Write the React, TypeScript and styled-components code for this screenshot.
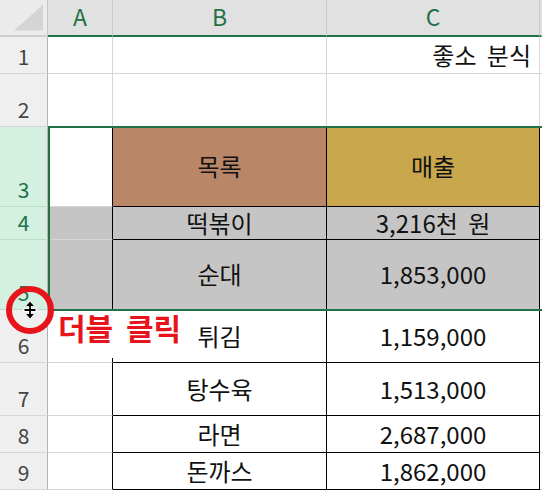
import * as React from 'react'
import styled, { createGlobalStyle } from 'styled-components'

const GREEN = '#217346'
const RED = '#e8141c'
const GRID = '#d6d6d6'

type Fill = 'none' | 'brown' | 'gold' | 'gray'

interface Row {
  n: number
  height: number
  selected?: boolean
  fill?: Fill
  headFill?: Fill
  b: string
  c: string
  ruled: boolean
}

const rows: Row[] = [
  { n: 1, height: 37, b: '', c: '좋소 분식', ruled: false },
  { n: 2, height: 53, b: '', c: '', ruled: false },
  { n: 3, height: 80, selected: true, headFill: 'brown', b: '목록', c: '매출', ruled: true },
  { n: 4, height: 33, selected: true, fill: 'gray', b: '떡볶이', c: '3,216천 원', ruled: true },
  { n: 5, height: 70, selected: true, fill: 'gray', b: '순대', c: '1,853,000', ruled: true },
  { n: 6, height: 53, b: '튀김', c: '1,159,000', ruled: true },
  { n: 7, height: 53, b: '탕수육', c: '1,513,000', ruled: true },
  { n: 8, height: 37, b: '라면', c: '2,687,000', ruled: true },
  { n: 9, height: 37, b: '돈까스', c: '1,862,000', ruled: true },
]

const fills: Record<Fill, string> = {
  none: '#ffffff',
  brown: '#b98768',
  gold: '#c9a84d',
  gray: '#c5c5c5',
}

const GlobalStyle = createGlobalStyle`
  html, body {
    margin: 0;
    padding: 0;
    background: #ffffff;
  }
  body {
    font-family: "Noto Sans CJK KR", "Noto Sans", sans-serif;
  }
`

export default function App() {
  const template = '37px ' + rows.map((r) => `${r.height}px`).join(' ')

  return (
    <>
      <GlobalStyle />
      <Frame>
        <Sheet style={{ gridTemplateRows: template }}>
          <Corner>
            <CornerMark viewBox="0 0 32 28">
              <polygon points="31,1 31,27 2,27" fill="#d4d4d4" />
            </CornerMark>
          </Corner>
          <ColHeader $col={2}>A</ColHeader>
          <ColHeader $col={3}>B</ColHeader>
          <ColHeader $col={4}>C</ColHeader>
          <ColHeader $col={5} $last />

          {rows.map((r) => {
            const line = r.n + 1
            return (
              <React.Fragment key={r.n}>
                <RowHeader $row={line} $selected={!!r.selected}>
                  {r.n}
                </RowHeader>
                <Cell $row={line} $col={2} $fill={r.fill ?? 'none'} $edge={r.ruled} $ruled={false} />
                <Cell $row={line} $col={3} $fill={r.fill ?? r.headFill ?? 'none'} $ruled={r.ruled}>
                  {r.b}
                </Cell>
                <Cell
                  $row={line}
                  $col={4}
                  $fill={r.fill ?? (r.headFill ? 'gold' : 'none')}
                  $ruled={r.ruled}
                  $align={r.n === 1 ? 'right' : 'center'}
                >
                  {r.c}
                </Cell>
                <Spill $row={line} />
              </React.Fragment>
            )
          })}

          <Selection />
          <Callout>더블 클릭</Callout>
        </Sheet>

        {/* red ring + row-resize cursor over the 5/6 row boundary */}
        <Ring width="50" height="50" viewBox="0 0 50 50">
          <circle cx="25" cy="25" r="21" fill="none" stroke={RED} strokeWidth="6" />
          <path
            d="M25 17.5 V32.5 M19.5 25 H30.5"
            stroke="#ffffff"
            strokeWidth="3.5"
            fill="none"
            strokeLinecap="round"
          />
          <path d="M25 18 V32 M19.5 25 H30.5" stroke="#000" strokeWidth="1.8" />
          <polygon points="25,16.5 21.2,21 28.8,21" fill="#000" />
          <polygon points="25,33.5 21.2,29 28.8,29" fill="#000" />
        </Ring>
      </Frame>
    </>
  )
}

// Styles
const Frame = styled.div`
  position: relative;
  width: 542px;
  height: 490px;
  overflow: hidden;
`

const Sheet = styled.div`
  display: grid;
  grid-template-columns: 48px 65px 214px 213px 1fr;
  width: 542px;
  height: 490px;
  background: #ffffff;
`

const Corner = styled.div`
  grid-row: 1;
  grid-column: 1;
  display: flex;
  align-items: flex-end;
  justify-content: flex-end;
  padding: 0 3px 3px 0;
  background: #ebebeb;
  border-right: 1px solid #c6c6c6;
  border-bottom: 2px solid #cfcfcf;
  box-sizing: border-box;
`

const CornerMark = styled.svg`
  width: 32px;
  height: 29px;
`

const ColHeader = styled.div<{ $col: number; $last?: boolean }>`
  grid-row: 1;
  grid-column: ${(p) => p.$col};
  display: flex;
  align-items: center;
  justify-content: center;
  padding-bottom: 3px;
  background: #e1e1e1;
  color: ${GREEN};
  font-size: 23px;
  border-right: 1px solid ${(p) => (p.$last ? 'transparent' : '#cacaca')};
  border-bottom: 2px solid ${GREEN};
  box-sizing: border-box;
`

const RowHeader = styled.div<{ $row: number; $selected: boolean }>`
  grid-row: ${(p) => p.$row};
  grid-column: 1;
  display: flex;
  align-items: flex-end;
  justify-content: center;
  padding-bottom: 6px;
  font-size: 21px;
  line-height: 1;
  background: ${(p) => (p.$selected ? '#d3f0e0' : '#efefef')};
  color: ${(p) => (p.$selected ? GREEN : '#444444')};
  border-right: 1px solid #b4b4b4;
  border-bottom: 1px solid ${(p) => (p.$selected ? '#bcdcc9' : GRID)};
  box-sizing: border-box;
`

const Cell = styled.div<{
  $row: number
  $col: number
  $fill: Fill
  $ruled: boolean
  $edge?: boolean
  $align?: 'center' | 'right'
}>`
  grid-row: ${(p) => p.$row};
  grid-column: ${(p) => p.$col};
  display: flex;
  align-items: ${(p) => (p.$align === 'right' ? 'flex-end' : 'center')};
  justify-content: ${(p) => (p.$align === 'right' ? 'flex-end' : 'center')};
  padding: ${(p) => (p.$align === 'right' ? '0 8px 3px 0' : '0')};
  font-size: 24px;
  line-height: 1.2;
  word-spacing: 5px;
  color: #111111;
  white-space: pre;
  background: ${(p) => fills[p.$fill]};
  border-right: 1px solid ${(p) => (p.$ruled || p.$edge ? '#000000' : GRID)};
  border-bottom: 1px solid ${(p) => (p.$ruled ? '#000000' : GRID)};
  box-sizing: border-box;
`

const Spill = styled.div<{ $row: number }>`
  grid-row: ${(p) => p.$row};
  grid-column: 5;
  background: #ffffff;
  border-bottom: 1px solid ${GRID};
`

const Selection = styled.div`
  grid-row: 4 / 7;
  grid-column: 2 / -1;
  margin: -1px 0 -1px 0;
  border: 2px solid ${GREEN};
  border-right: none;
  pointer-events: none;
  z-index: 1;
`

const Callout = styled.div`
  grid-row: 7;
  grid-column: 2 / 4;
  justify-self: start;
  align-self: start;
  margin: 1px 0 0 4px;
  padding: 0 10px 15px 6px;
  background: #ffffff;
  color: ${RED};
  font-size: 30px;
  font-weight: 700;
  line-height: 32px;
  word-spacing: 6px;
  white-space: pre;
  z-index: 2;
`

const Ring = styled.svg`
  position: absolute;
  left: 5px;
  top: 285px;
  z-index: 3;
`
